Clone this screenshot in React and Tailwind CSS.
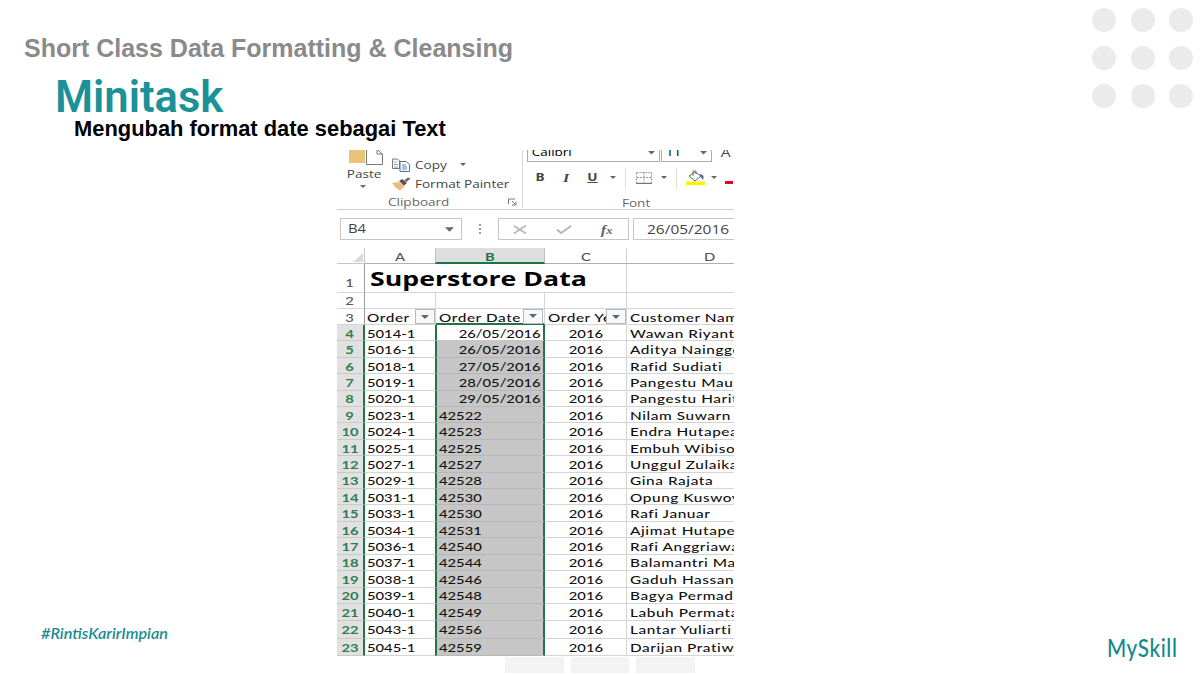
const rows = [
    { n: 4, order: '5014-1', date: '26/05/2016', name: 'Wawan Riyanti' },
    { n: 5, order: '5016-1', date: '26/05/2016', name: 'Aditya Nainggolan' },
    { n: 6, order: '5018-1', date: '27/05/2016', name: 'Rafid Sudiati' },
    { n: 7, order: '5019-1', date: '28/05/2016', name: 'Pangestu Maulana' },
    { n: 8, order: '5020-1', date: '29/05/2016', name: 'Pangestu Haritono' },
    { n: 9, order: '5023-1', date: '42522', name: 'Nilam Suwarn' },
    { n: 10, order: '5024-1', date: '42523', name: 'Endra Hutapea' },
    { n: 11, order: '5025-1', date: '42525', name: 'Embuh Wibisono' },
    { n: 12, order: '5027-1', date: '42527', name: 'Unggul Zulaika' },
    { n: 13, order: '5029-1', date: '42528', name: 'Gina Rajata' },
    { n: 14, order: '5031-1', date: '42530', name: 'Opung Kuswoyo' },
    { n: 15, order: '5033-1', date: '42530', name: 'Rafi Januar' },
    { n: 16, order: '5034-1', date: '42531', name: 'Ajimat Hutape' },
    { n: 17, order: '5036-1', date: '42540', name: 'Rafi Anggriawan' },
    { n: 18, order: '5037-1', date: '42544', name: 'Balamantri Ma' },
    { n: 19, order: '5038-1', date: '42546', name: 'Gaduh Hassan' },
    { n: 20, order: '5039-1', date: '42548', name: 'Bagya Permad' },
    { n: 21, order: '5040-1', date: '42549', name: 'Labuh Permata' },
    { n: 22, order: '5043-1', date: '42556', name: 'Lantar Yuliarti' },
    { n: 23, order: '5045-1', date: '42559', name: 'Darijan Pratiwi' },
];

const Caret = ({ className = 'w-[7px] h-[3.5px]' }) => (
    <svg viewBox="0 0 8 4" className={`shrink-0 ${className}`}>
        <path d="M0 0h8L4 4z" fill="#666" />
    </svg>
);

const FilterButton = () => (
    <span className="w-[20px] h-[15px] shrink-0 border border-[#b5b9c2] bg-[#f7f8fa] flex items-center justify-center">
        <Caret className="w-[8px] h-[4px]" />
    </span>
);

// Text in the sheet is wider than its font
const Wide = ({ children, className = '' }) => (
    <span className={`inline-block whitespace-pre scale-x-[1.23] ${className}`}>{children}</span>
);

const Label = ({ children, className = '' }) => (
    <span className={`inline-block whitespace-pre origin-left scale-x-[1.28] tracking-[0.45px] ${className}`}>{children}</span>
);

const Ribbon = () => (
    <div className="h-[60px] shrink-0 border-b border-[#d0d0d0] flex font-['Open_Sans','Noto_Sans',sans-serif] text-[11px] text-[#444]">
        {/* Clipboard */}
        <div className="w-[186px] h-[58px] shrink-0 border-r border-[#d8d8d8] flex flex-col">
            <div className="flex h-[44px]">
                <div className="w-[54px] shrink-0 flex flex-col items-center">
                    <svg viewBox="0 0 35 16" className="w-[35px] h-[16px] ml-[4px] shrink-0">
                        <path d="M0 0h16v13H0z" fill="#ebc27a" />
                        <path d="M17.500 0V14.500H33.500V4.500L29 0" fill="#fff" stroke="#777" />
                        <path d="M28 0v4h6" fill="none" stroke="#777" />
                    </svg>
                    <Wide className="h-[17px] leading-[16px]">Paste</Wide>
                    <Caret className="mt-[2px] w-[6px] h-[3px] mr-[2px]" />
                </div>
                <div className="flex flex-col pt-[5px]">
                    <div className="flex h-[19px] items-center">
                        <svg viewBox="0 0 20 14" className="w-[20px] h-[14px] mr-[4px]">
                            <path d="M1.500 1h5l2 2v7.500h-7z" fill="#fff" stroke="#777" />
                            <path d="M3 4h3M3 6.500h4M3 9h4" stroke="#7ba0cb" />
                            <path d="M9 3.500h6l3.500 3v7H9z" fill="#fff" stroke="#56708f" />
                            <path d="M11 7h4M11 9h5M11 11h5" stroke="#5687c0" />
                        </svg>
                        <Wide className="origin-left w-[45px] scale-x-[1.3] pt-px">Copy</Wide>
                        <Caret className="w-[6px] h-[3px]" />
                    </div>
                    <div className="flex h-[19px] items-center">
                        <svg viewBox="0 0 20 14" className="w-[20px] h-[14px] mr-[4px]">
                            <path d="M1 6l7-1 6 4-5 4.500-4-2.500z" fill="#edbd76" />
                            <path d="M8 4l3-2 5 4-3 2.500z" fill="#555" />
                            <path d="M13 3.500l4-3 2.500 1-4 3.500z" fill="#6b6b6b" />
                        </svg>
                        <Wide className="origin-left pt-px">Format Painter</Wide>
                    </div>
                </div>
            </div>
            <div className="flex h-[15px] items-center mt-[1px]">
                <Wide className="origin-left ml-[51px] w-[120px] pt-[2px] text-[#666]">Clipboard</Wide>
                <svg viewBox="0 0 9 8" className="w-[9px] h-[8px] mt-px" fill="none" stroke="#777">
                    <path d="M.5 6V1H7M4 3l3 3M8 3.500V7H4" />
                </svg>
            </div>
        </div>

        {/* Font */}
        <div className="flex flex-col pl-[4px] shrink-0">
            <div className="flex h-[12px]">
                <div className="w-[133px] h-[12px] overflow-hidden border-x border-b border-[#ababab] flex">
                    <Wide className="origin-left w-[120px] leading-[16px] -mt-[6px] pl-[3px] text-black">Calibri</Wide>
                    <Caret className="w-[7px] h-[3.5px] mt-[1px]" />
                </div>
                <div className="ml-[1px] w-[51px] h-[12px] overflow-hidden border-x border-b border-[#ababab] flex">
                    <Wide className="origin-left w-[38px] leading-[16px] -mt-[6px] pl-[3px] text-black">11</Wide>
                    <Caret className="w-[7px] h-[3.5px] mt-[1px]" />
                </div>
                <span className="ml-[10px] -mt-[5px] text-[12px] leading-[16px] scale-x-[1.3]">A</span>
            </div>
            <div className="flex h-[31px] items-center">
                <Wide className="w-[26px] text-center font-bold">B</Wide>
                <Wide className="w-[26px] text-center font-bold italic font-['Liberation_Serif',serif] text-[13px]">I</Wide>
                <Wide className="w-[27px] text-center font-bold underline">U</Wide>
                <Caret className="ml-[4px] w-[6px] h-[3px]" />
                <span className="ml-[9px] mr-[10px] w-px h-[20px] bg-[#ddd]" />
                <svg viewBox="0 0 16 12" className="w-[16px] h-[12px]" fill="none" stroke="#999">
                    <path d="M.5.500h15M.5.500v10M15.500.500v10M8 .5v10M1 5.500h14" strokeDasharray="2 1" />
                    <path d="M0 11.300h16" stroke="#555" />
                </svg>
                <Caret className="ml-[9px] w-[6px] h-[3px]" />
                <span className="ml-[9px] mr-[9px] w-px h-[20px] bg-[#ddd]" />
                <svg viewBox="0 0 19 15" className="w-[19px] h-[15px]">
                    <path d="M3 6l6-4 6 4-6 5z" fill="#fff" stroke="#666" />
                    <path d="M7 6V1h3v3" fill="none" stroke="#a06a4a" />
                    <path d="M14 4c4 1 4 3 3 6l-3-4z" fill="#3f6fa8" />
                    <path d="M0 11.500h19V15H0z" fill="#fff200" />
                </svg>
                <Caret className="ml-[6px] w-[6px] h-[3px]" />
                <span className="ml-[8px] mt-[10px] w-[8px] h-[3px] bg-[#e00b1c]" />
            </div>
            <Wide className="origin-left ml-[95px] h-[16px] leading-[19px] text-[#666] scale-x-[1.3]">Font</Wide>
        </div>
    </div>
);

const FormulaBar = () => (
    <div className="h-[38px] shrink-0 pt-[8px] pl-[3px] flex font-['Open_Sans','Noto_Sans',sans-serif] text-[#444]">
        <div className="w-[122px] h-[22px] shrink-0 border border-[#c6c6c6] flex items-center justify-between pl-[7px] pr-[7px]">
            <Wide className="origin-left text-[12px]">B4</Wide>
            <Caret className="w-[9px] h-[5px]" />
        </div>
        <div className="w-[36px] shrink-0 flex flex-col items-center justify-center gap-[2px] h-[22px]">
            <span className="size-[2px] bg-[#999]" />
            <span className="size-[2px] bg-[#999]" />
            <span className="size-[2px] bg-[#999]" />
        </div>
        <div className="w-[131px] h-[22px] shrink-0 border border-[#c6c6c6] flex items-center pl-[14px]">
            <svg viewBox="0 0 14 9" className="w-[14px] h-[9px]" stroke="#b8b8b8" strokeWidth="1.600" fill="none">
                <path d="M1 1l12 7.500M13 .5L1 8.500" />
            </svg>
            <svg viewBox="0 0 16 9" className="w-[16px] h-[9px] ml-[29px]" stroke="#b5b5b5" strokeWidth="2" fill="none">
                <path d="M1 4.500l4 3.500 10-7" />
            </svg>
            <span className="ml-[30px] font-['Liberation_Serif',serif] italic font-bold text-[13px] leading-none scale-x-[1.25] text-[#666]">
                f<span className="text-[10px]">x</span>
            </span>
        </div>
        <div className="ml-[4px] w-[110px] h-[22px] shrink-0 border border-[#c6c6c6] flex items-center pl-[13px]">
            <Wide className="origin-left text-[12px] scale-x-[1.29] pt-px">26/05/2016</Wide>
        </div>
    </div>
);

const SheetRow = ({ row }) => {
    const isDate = row.date.includes('/');
    return (
        <div className={`flex shrink-0 ${row.n > 20 ? 'h-[17.300px]' : 'h-[16.410px]'}`}>
            <div className="w-[28px] shrink-0 bg-[#e1e1e1] border-r-2 border-b border-r-[#217346] border-b-[#c9c9c9] flex items-center justify-center pt-[2px] pr-[1px] text-[#2f7d54] font-bold">
                <Wide>{row.n}</Wide>
            </div>
            <div className="w-[70px] shrink-0 border-b border-[#d4d4d4] flex items-center pt-[2px] pl-[2px]">
                <Wide className="origin-left">{row.order}</Wide>
            </div>
            <div className={`w-[110px] shrink-0 border-x-2 border-x-[#217346] border-b flex items-center pt-[2px]
                            ${row.n === 4 ? 'bg-white border-b-[#c6c6c6]' : 'bg-[#c6c6c6] border-b-[#b7b7b7]'}
                            ${isDate ? 'justify-end pr-[2px]' : 'pl-[2px]'}`}>
                <Wide className={isDate ? 'origin-right' : 'origin-left'}>{row.date}</Wide>
            </div>
            <div className="w-[82px] shrink-0 border-r border-b border-[#d4d4d4] flex items-center justify-center pt-[2px]">
                <Wide>2016</Wide>
            </div>
            <div className="w-[107px] shrink-0 border-b border-[#d4d4d4] flex items-center pt-[2px] pl-[3px]">
                <Label>{row.name}</Label>
            </div>
        </div>
    );
};

const Sheet = () => (
    <div className="flex flex-col font-['Lato','Open_Sans',sans-serif] font-medium text-[12px] leading-none text-[#111]">
        {/* Column letters */}
        <div className="flex h-[16px] shrink-0 text-[#555]">
            <div className="w-[28px] shrink-0 border-r border-b border-[#c6c6c6] flex justify-end items-end">
                <svg viewBox="0 0 10 9" className="w-[10px] h-[9px] m-[1px]">
                    <path d="M10 0v9H0z" fill="#dcdcdc" />
                </svg>
            </div>
            <div className="w-[70px] shrink-0 border-b border-[#b0b0b0] flex items-center justify-center pt-[2px]"><Wide>A</Wide></div>
            <div className="w-[110px] shrink-0 border-b-2 border-b-[#217346] border-x border-x-[#c0c0c0] bg-[#dedede] flex items-center justify-center pt-[3px] text-[#217346] font-bold"><Wide>B</Wide></div>
            <div className="w-[82px] shrink-0 border-r border-b border-r-[#d4d4d4] border-b-[#b0b0b0] flex items-center justify-center pt-[2px]"><Wide>C</Wide></div>
            <div className="w-[107px] shrink-0 border-b border-[#b0b0b0] flex items-center justify-end pr-[20px] pt-[2px]"><Wide>D</Wide></div>
        </div>
        {/* Title row */}
        <div className="flex h-[28.500px] shrink-0">
            <div className="w-[28px] shrink-0 border-r border-b border-r-[#999] border-b-[#d4d4d4] flex items-end justify-center pb-[3px] pr-[3px] text-[#555]"><Wide>1</Wide></div>
            <div className="w-[262px] shrink-0 border-r border-b border-[#d4d4d4] flex items-center pl-[5px] pt-[3px]">
                <span className="inline-block origin-left scale-x-[1.335] whitespace-nowrap font-['Open_Sans',sans-serif] font-bold text-[20px] text-black">Superstore Data</span>
            </div>
            <div className="w-[107px] border-b border-[#d4d4d4]" />
        </div>
        <div className="flex h-[16.500px] shrink-0">
            <div className="w-[28px] shrink-0 border-r border-b border-r-[#999] border-b-[#d4d4d4] flex items-center justify-center pr-[3px] pt-[2px] text-[#555]"><Wide>2</Wide></div>
            <div className="w-[71px] shrink-0 border-r border-b border-[#d4d4d4]" />
            <div className="w-[109px] shrink-0 border-r border-b border-[#d4d4d4]" />
            <div className="w-[82px] shrink-0 border-r border-b border-[#d4d4d4]" />
            <div className="w-[107px] border-b border-[#d4d4d4]" />
        </div>
        {/* Field names */}
        <div className="flex h-[16px] shrink-0">
            <div className="w-[28px] shrink-0 border-r border-b border-r-[#999] border-b-[#d4d4d4] flex items-center justify-center pr-[3px] pt-[2px] text-[#555]"><Wide>3</Wide></div>
            <div className="w-[71px] shrink-0 border-r border-b border-[#d4d4d4] flex items-center justify-between pl-[2px]">
                <Label className="pt-[2px]">Order</Label>
                <FilterButton />
            </div>
            <div className="w-[109px] shrink-0 border-r border-b-2 border-r-[#d4d4d4] border-b-[#217346] flex items-center justify-between pl-[3px] pr-[1px]">
                <Label className="pt-[3px]">Order Date</Label>
                <FilterButton />
            </div>
            <div className="w-[82px] shrink-0 border-r border-b border-[#d4d4d4] flex items-center justify-between pl-[3px]">
                <span className="w-[58px] overflow-hidden"><Label className="pt-[2px]">Order Year</Label></span>
                <FilterButton />
            </div>
            <div className="w-[107px] border-b border-[#d4d4d4] flex items-center pl-[3px] pt-[2px]">
                <Label>Customer Nam</Label>
            </div>
        </div>
        {rows.map(row => <SheetRow key={row.n} row={row} />)}
    </div>
);

const App = () => {
    return (
        <div className="relative w-[1200px] h-[675px] bg-white overflow-hidden font-['Liberation_Sans',Arial,sans-serif]">
            <header className="h-[150px] flex justify-between">
                <div className="pt-[33px]">
                    <p className="ml-[24px] h-[30px] leading-[30px] font-bold text-[25px] text-[#8a8a8a] whitespace-nowrap">
                        Short Class Data Formatting &amp; Cleansing
                    </p>
                    <h1 className="ml-[55px] mt-[12px] h-[46px] leading-[46px] font-['Roboto',sans-serif] font-semibold text-[43.500px] text-[#1b9297] whitespace-nowrap">
                        Minitask
                    </h1>
                    <h2 className="ml-[74px] -mt-[4px] h-[24px] leading-[24px] font-bold text-[21.900px] text-black whitespace-nowrap">
                        Mengubah format date sebagai Text
                    </h2>
                </div>
                <div className="grid grid-cols-3 gap-x-[14.500px] gap-y-[14px] content-start pt-[8px] pr-[7px]">
                    {Array.from({ length: 9 }).map((_, i) => (
                        <span key={i} className="size-[24px] rounded-full bg-[#ebebeb]" />
                    ))}
                </div>
            </header>

            <main className="ml-[337px] w-[397px] h-[507px] overflow-hidden flex flex-col bg-white">
                <Ribbon />
                <FormulaBar />
                <Sheet />
            </main>

            <div className="ml-[505px] flex gap-[7px]">
                <span className="w-[58.500px] h-[16px] bg-[#f3f3f3]" />
                <span className="w-[58.500px] h-[16px] bg-[#f3f3f3]" />
                <span className="w-[58.500px] h-[16px] bg-[#f3f3f3]" />
            </div>

            {/* Footer marks sit over the slide corners */}
            <span className="absolute left-[41px] top-[623px] leading-[20px] origin-left scale-x-[1.080] font-['Lato',cursive] italic font-semibold text-[15px] text-[#1b8c92]">
                #RintisKarirImpian
            </span>
            <span className="absolute left-[1107px] top-[633px] leading-[30px] origin-left scale-x-[0.860] tracking-[0.7px] font-['Lato',sans-serif] font-medium text-[24px] text-[#118a8a]">
                MySkill
            </span>
        </div>
    );
};

export default App;
